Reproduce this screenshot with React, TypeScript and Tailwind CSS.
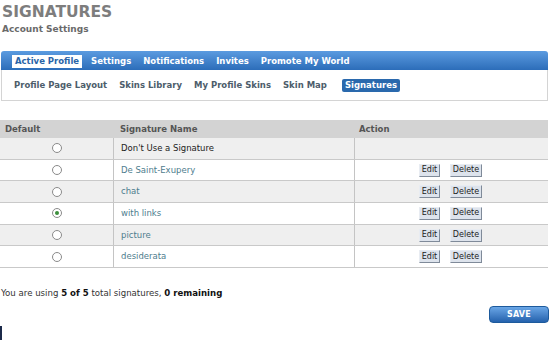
import React from "react";

const rows = [
  { name: "Don't Use a Signature", link: false, checked: false, actions: false },
  { name: "De Saint-Exupery", link: true, checked: false, actions: true },
  { name: "chat", link: true, checked: false, actions: true },
  { name: "with links", link: true, checked: true, actions: true },
  { name: "picture", link: true, checked: false, actions: true },
  { name: "desiderata", link: true, checked: false, actions: true },
];

function Radio({ checked }: { checked: boolean }) {
  return (
    <span className="relative inline-flex h-[10px] w-[10px] items-center justify-center rounded-full border border-[#8a8a8a] bg-white">
      {checked && <span className="h-[4px] w-[4px] rounded-full bg-[#3c8f3c]" />}
    </span>
  );
}

function SmallBtn({ label, w }: { label: string; w: string }) {
  return (
    <span
      className={`inline-flex h-[13px] ${w} items-center justify-center border border-[#e8ecf2] border-b-[#7f8a99] border-r-[#7f8a99] bg-[#dde3ec] text-[8px] leading-none text-[#222]`}
    >
      {label}
    </span>
  );
}

export default function App() {
  return (
    <div
      className="relative h-[340px] w-[553px] overflow-hidden bg-white"
      style={{ fontFamily: '"DejaVu Sans", Verdana, sans-serif' }}
    >
      <div className="pl-[2px] pt-[2px]">
        <div className="text-[15.5px] font-bold leading-[20px] text-[#7d7d7d]">SIGNATURES</div>
        <div className="mt-[1px] text-[9px] font-bold leading-[12px] text-[#6a6a6a]">Account Settings</div>
      </div>

      <div className="ml-[1px] mt-[16px] w-[547px]">
        <div className="flex h-[19px] items-end rounded-t-[3px] bg-gradient-to-b from-[#5b9be0] to-[#2c6db9] pl-[11px]">
          {["Active Profile", "Settings", "Notifications", "Invites", "Promote My World"].map((t, i) => (
            <span
              key={t}
              className={`mb-[2px] mr-[6px] flex h-[13px] items-center px-[3px] text-[8.5px] font-bold leading-none ${
                i === 0 ? "bg-white text-[#2a64a8]" : "text-white"
              }`}
            >
              {t}
            </span>
          ))}
        </div>
        <div className="flex h-[31px] items-center gap-[12px] border border-t-0 border-[#d4d4d4] pl-[12px]">
          {["Profile Page Layout", "Skins Library", "My Profile Skins", "Skin Map"].map((t) => (
            <span key={t} className="text-[8.5px] font-bold leading-none text-[#4d5d6b]">
              {t}
            </span>
          ))}
          <span className="ml-[3px] flex h-[13px] items-center rounded-[2px] bg-[#2a69ad] px-[3px] text-[8.5px] font-bold leading-none text-white">
            Signatures
          </span>
        </div>
      </div>

      <div className="mt-[19px] w-[548px] text-[8.5px]">
        <div className="grid h-[18px] grid-cols-[114px_241px_1fr] bg-[#d3d3d3] font-bold text-[#555]">
          <div className="flex items-center pl-[5px]">Default</div>
          <div className="flex items-center pl-[6px]">Signature Name</div>
          <div className="flex items-center pl-[4px]">Action</div>
        </div>
        {rows.map((r, i) => (
          <div
            key={r.name}
            className={`grid h-[21.7px] grid-cols-[114px_241px_1fr] border-b border-[#c9c9c9] ${
              i % 2 === 0 ? "bg-[#efefef]" : "bg-white"
            }`}
          >
            <div className="flex items-center justify-center border-r border-[#c4c4c4]">
              <Radio checked={r.checked} />
            </div>
            <div className={`flex items-center border-r border-[#c4c4c4] pl-[7px] ${r.link ? "text-[#4e7d8e]" : "text-[#222]"}`}>
              {r.name}
            </div>
            <div className="flex items-center justify-center gap-[10px] pr-[2px]">
              {r.actions && (
                <>
                  <SmallBtn label="Edit" w="w-[21px]" />
                  <SmallBtn label="Delete" w="w-[32px]" />
                </>
              )}
            </div>
          </div>
        ))}
      </div>

      <div className="mt-[20px] pl-[1px] text-[8.6px] leading-[10px] text-[#333]">
        You are using <b className="text-[#111]">5 of 5</b> total signatures, <b className="text-[#111]">0 remaining</b>
      </div>

      <div className="mt-[8px] flex justify-end pr-[4px]">
        <span className="flex h-[17px] w-[60px] items-center justify-center rounded-[4px] border border-[#1d5a9c] bg-gradient-to-b from-[#6aa6e6] to-[#2462ad] text-[8px] font-bold tracking-wide text-white">
          SAVE
        </span>
      </div>

      <div className="absolute bottom-0 left-0 h-[14px] w-[2px] bg-[#1c2a4a]" />
    </div>
  );
}
